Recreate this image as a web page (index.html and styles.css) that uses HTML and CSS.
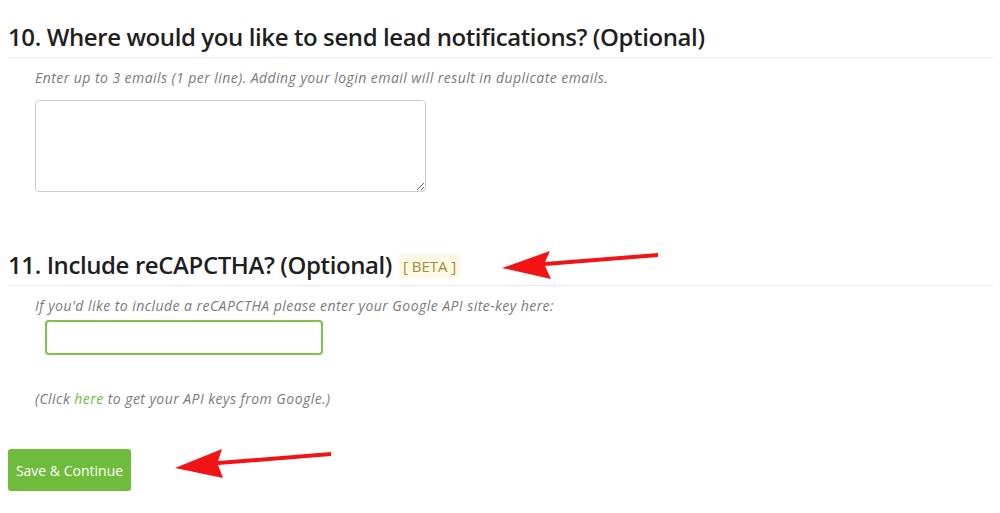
FILE: index.html
```html
<!DOCTYPE html>
<html>
<head>
<meta charset="utf-8">
<link rel="stylesheet" href="styles.css">
</head>
<body>
<div class="page">
  <section class="step step-first">
    <h2 class="step-title">10. Where would you like to send lead notifications? (Optional)</h2>
    <p class="hint">Enter up to 3 emails (1 per line). Adding your login email will result in duplicate emails.</p>
    <textarea class="emails"></textarea>
  </section>
  <section class="step step-second">
    <h2 class="step-title">11. Include reCAPCTHA? (Optional) <span class="beta">[ BETA ]</span></h2>
    <p class="hint">If you'd like to include a reCAPCTHA please enter your Google API site-key here:</p>
    <input class="sitekey" type="text">
    <p class="hint click">(Click <a href="#" class="link">here</a> to get your API keys from Google.)</p>
  </section>
  <button class="save">Save &amp; Continue</button>
  <svg class="arrows" width="1000" height="513" viewBox="0 0 1000 513">
    <path d="M658 253 L658 257 L545 266 L551 279 L502 268 L550 251 L545 262 Z" fill="#f21414"/>
    <path d="M331 452 L331 456 L218 465 L223 478 L175 468 L222 449 L218 461 Z" fill="#f21414"/>
  </svg>
</div>
</body>
</html>
```
FILE: styles.css
```css
html, body {
  margin: 0;
  padding: 0;
  background: #fff;
}
.page {
  position: relative;
  padding: 21px 7px 0 8px;
  width: 985px;
}
.step {
  display: flex;
  flex-direction: column;
  align-items: flex-start;
}
.step-title {
  margin: 0;
  align-self: stretch;
  font-family: "Open Sans", sans-serif;
  font-weight: 600;
  font-size: 24px;
  letter-spacing: -0.4px;
  line-height: 32px;
  color: #1f1f1f;
  padding-bottom: 4px;
  border-bottom: 1px solid #ececec;
}
.hint {
  margin: 10px 0 0 27px;
  font-family: "Open Sans", sans-serif;
  font-style: italic;
  font-size: 14px;
  letter-spacing: 0.45px;
  line-height: 20px;
  color: #7a7a7a;
}
.emails {
  margin: 12px 0 0 27px;
  width: 391px;
  height: 92px;
  box-sizing: border-box;
  border: 1px solid #ccc;
  border-radius: 4px;
  resize: vertical;
}
.step-second {
  margin-top: 57px;
}
.beta {
  display: inline-block;
  vertical-align: 2px;
  margin-left: 1px;
  padding: 1px 4px;
  background: #fcf8e3;
  color: #a38a44;
  font-weight: 400;
  font-size: 15px;
  letter-spacing: 0;
  line-height: 22px;
}
.sitekey {
  margin: 4px 0 0 37px;
  width: 278px;
  height: 35px;
  box-sizing: border-box;
  border: 2px solid #7cc443;
  border-radius: 4px;
  outline: none;
}
.click {
  margin-top: 34px;
}
.link {
  color: #6cbb3c;
  text-decoration: none;
}
.save {
  margin-top: 40px;
  width: 123px;
  height: 42px;
  border: none;
  border-radius: 3px;
  background: #6fbb3b;
  color: #fff;
  font-family: "Open Sans", sans-serif;
  font-size: 14px;
  padding: 0;
}
.arrows {
  position: absolute;
  left: 0;
  top: 0;
  pointer-events: none;
}
```
